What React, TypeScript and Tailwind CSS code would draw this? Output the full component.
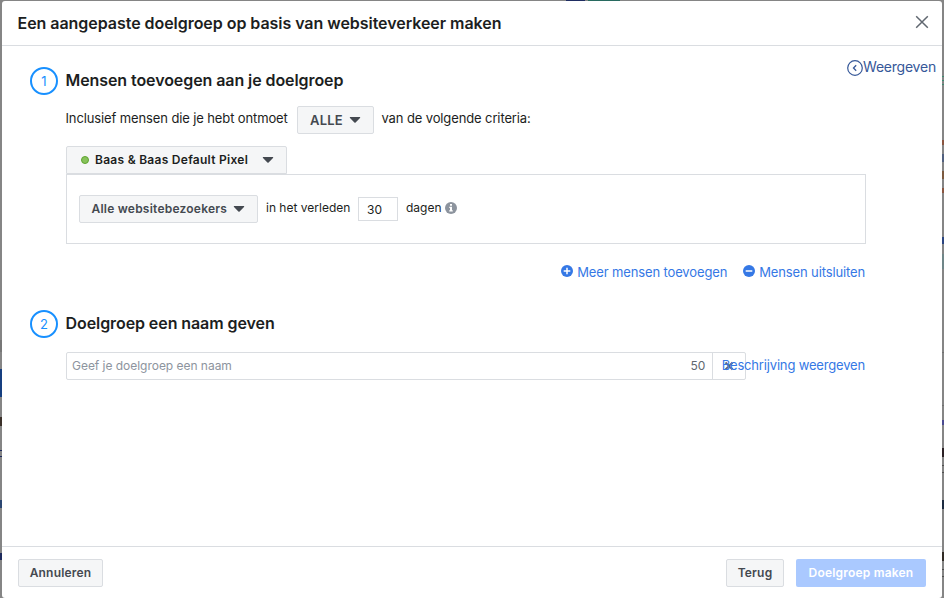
import React from 'react';

type StepHeadingProps = {
    number: number;
    title: string;
};

// Pieces of the page that stay visible beside the dialog
const leftSlices = [
    'top-[340px] h-[12px] bg-[#777777]',
    'top-[369px] h-[28px] bg-[#163f80]',
    'top-[417px] h-[9px] bg-[#3b3029]',
    'top-[450px] h-px bg-[#1d2a5c]',
    'top-[456px] h-px bg-[#1d2a5c]',
    'top-[500px] h-[8px] bg-[#2c4671]',
    'top-[553px] h-[7px] bg-[#1d2a5c]',
];

const rightSlices = [
    'top-[76px] h-px bg-[#3d8a70]',
    'top-[80px] h-px bg-[#3d8a70]',
    'top-[84px] h-px bg-[#3d8a70]',
    'top-[140px] h-[5px] bg-[#8a5540]',
    'top-[154px] h-[8px] bg-[#51607f]',
    'top-[171px] h-[8px] bg-[#7c5a40]',
    'top-[188px] h-[5px] bg-[#8a5540]',
    'top-[237px] h-[7px] bg-[#2a4480]',
    'top-[254px] h-[15px] bg-[#6f8688]',
    'top-[352px] h-px bg-[#707070]',
    'top-[405px] h-px bg-[#707070]',
    'top-[420px] h-[5px] bg-[#4a4a90]',
    'top-[448px] h-[9px] bg-[#2b2024]',
    'top-[465px] h-px bg-[#505050]',
    'top-[472px] h-px bg-[#505050]',
    'top-[500px] h-[9px] bg-[#1c2b40]',
    'top-[552px] h-[9px] bg-[#302a24]',
    'top-[569px] h-px bg-[#505050]',
    'top-[576px] h-px bg-[#505050]',
];

const Caret: React.FC = () => (
    <svg width="12" height="8" viewBox="0 0 12 8" className="shrink-0 text-[#444950]">
        <path d="M1.4 1h9.2c.6 0 .8.6.4 1L6.6 6.4a.9.9 0 0 1-1.2 0L1 2c-.4-.4-.2-1 .4-1Z" fill="currentColor" />
    </svg>
);

const StepHeading: React.FC<StepHeadingProps> = ({ number, title }) => (
    <div className="flex h-7 items-center">
        <span className="mr-[7.5px] flex size-7 shrink-0 items-center justify-center rounded-full border-2 border-[#1890ff] pt-[2px] text-[13px] text-[#1890ff]">
            {number}
        </span>
        <h2 className="-mt-[2px] text-[16px] font-semibold leading-5 tracking-[-0.08px]">{title}</h2>
    </div>
);

const App: React.FC = () => {
    return (
        <div className="relative h-[598px] w-[944px] overflow-hidden bg-[#858585] px-[2px] pt-px font-['Inter',sans-serif] text-[13px] text-[#1c1e21]">
            {leftSlices.map(slice => <span key={slice} className={`absolute left-0 w-[2px] ${slice}`} />)}
            {rightSlices.map(slice => <span key={slice} className={`absolute right-0 w-[2px] ${slice}`} />)}
            <span className="absolute left-[566px] top-0 h-px w-[19px] bg-[#1f2d62]" />
            <span className="absolute left-[588px] top-0 h-px w-[32px] bg-[#286a60]" />

            <div className="relative flex h-[597px] flex-col whitespace-nowrap rounded-[3px] bg-white">
                <header className="flex h-[45px] shrink-0 items-center justify-between border-b border-[#dadde1] pl-[15.5px] pr-[13px]">
                    <h1 className="text-[16px] font-semibold leading-5 tracking-[-0.045px]">
                        Een aangepaste doelgroep op basis van websiteverkeer maken
                    </h1>
                    <button aria-label="Sluiten" className="-mt-[2px] text-[#606770]">
                        <svg width="14" height="14" viewBox="0 0 14 14" fill="none" stroke="currentColor" strokeWidth="1.5">
                            <path d="M1.2 1.2l11.6 11.6M12.8 1.2L1.2 12.8" />
                        </svg>
                    </button>
                </header>

                <main className="relative flex-1 pl-7 pt-[21px]">
                    <button className="absolute right-[6px] top-[10px] flex h-5 items-center text-[14px] tracking-[-0.22px] text-[#365899]">
                        <svg width="16" height="16" viewBox="0 0 16 16" fill="none" stroke="currentColor" className="mt-[3px]">
                            <circle cx="8" cy="8" r="7.3" strokeWidth="1.2" />
                            <path d="M9.2 5.3L6.5 8l2.7 2.7" strokeWidth="1.3" />
                        </svg>
                        <span>Weergeven</span>
                    </button>

                    <StepHeading number={1} title="Mensen toevoegen aan je doelgroep" />

                    <section className="ml-9 w-[800px]">
                        <div className="mt-[11px] flex h-7 items-center tracking-[-0.12px]">
                            <span className="-ml-[0.5px] -mt-[2px] w-[231.5px]">Inclusief mensen die je hebt ontmoet</span>
                            <button className="mr-[7.5px] flex h-7 w-[77px] items-center justify-between rounded-[2px] border border-[#dadde1] bg-[#f5f6f7] px-3 font-semibold tracking-[0.2px] text-[#444950]">
                                <span className="pt-[2px]">ALLE</span> <Caret />
                            </button>
                            <span className="-mt-[2px]">van de volgende criteria:</span>
                        </div>

                        <button className="mt-3 flex h-7 w-[221px] items-center rounded-t-[2px] border border-[#dadde1] bg-[#f5f6f7] pl-[14px] pr-3 text-[12px] font-semibold tracking-[0.27px]">
                            <span className="mr-[6px] size-2 rounded-full border border-[#5fa52f] bg-[#87c25b]" />
                            <span className="mr-auto">Baas &amp; Baas Default Pixel</span>
                            <Caret />
                        </button>
                        <div className="flex h-[70px] border border-[#dadde1] pl-3 pt-5">
                            <button className="mr-2 flex h-7 w-[179px] items-center justify-between rounded-[2px] border border-[#dadde1] bg-[#f5f6f7] pl-[11.5px] pr-3 text-[12px] font-semibold tracking-[0.22px] text-[#444950]">
                                Alle websitebezoekers <Caret />
                            </button>
                            <span className="w-[92px] pt-[3px] text-[12px] leading-5">in het verleden</span>
                            <input
                                defaultValue="30"
                                className="mr-2 mt-[2px] h-6 w-10 border border-[#dadde1] bg-white px-2 text-[12px] outline-none"
                            />
                            <span className="w-[39px] pt-[3px] text-[12px] leading-5">dagen</span>
                            <svg width="12" height="12" viewBox="0 0 12 12" className="mt-[7px]">
                                <circle cx="6" cy="6" r="6" fill="#8d949e" />
                                <path d="M5 2h2v1.8H5zM4.3 4.8H7v3.5h.8v1.2H4.2V8.3H5V6h-.7z" fill="#fff" />
                            </svg>
                        </div>

                        <div className="mr-px mt-[19px] flex h-5 items-center justify-end tracking-[-0.13px] text-[#3578e5]">
                            <button className="mr-4 flex items-center">
                                <svg width="12" height="12" viewBox="0 0 12 12" className="-mt-[4px] mr-1">
                                    <circle cx="6" cy="6" r="6" fill="currentColor" />
                                    <path d="M6 2.7v6.6M2.7 6h6.6" stroke="#fff" strokeWidth="1.5" />
                                </svg>
                                Meer mensen toevoegen
                            </button>
                            <button className="flex items-center">
                                <svg width="12" height="12" viewBox="0 0 12 12" className="-mt-[4px] mr-1">
                                    <circle cx="6" cy="6" r="6" fill="currentColor" />
                                    <path d="M2.7 6h6.6" stroke="#fff" strokeWidth="1.5" />
                                </svg>
                                Mensen uitsluiten
                            </button>
                        </div>
                    </section>

                    <div className="mt-[27px]">
                        <StepHeading number={2} title="Doelgroep een naam geven" />
                    </div>
                    <div className="relative ml-9 mt-[14px] flex h-7 w-[800px] items-center">
                        <div className="flex h-7 w-[680px] items-center rounded-[2px] border border-[#dadde1]">
                            <input
                                placeholder="Geef je doelgroep een naam"
                                className="min-w-0 flex-1 pl-[5px] text-[12px] tracking-[-0.03px] outline-none placeholder:text-[#8d949e]"
                            />
                            <span className="mr-[7px] text-[12px] tracking-[-0.2px] text-[#606770]">50</span>
                            <button aria-label="Wissen" className="flex h-full w-[33px] items-center justify-center border-l border-[#dadde1] text-[#606770]">
                                <svg width="10" height="10" viewBox="0 0 10 10" stroke="currentColor" strokeWidth="1.8">
                                    <path d="M1.5 1.5l7 7M8.5 1.5l-7 7" />
                                </svg>
                            </button>
                        </div>
                        {/* The link runs over the clear button */}
                        <button className="absolute right-px top-[3px] leading-5 tracking-[-0.17px] text-[#3578e5]">Beschrijving weergeven</button>
                    </div>
                </main>

                <footer className="flex h-[52px] shrink-0 border-t border-[#dadde1] px-4 pt-3 text-[12px] font-semibold tracking-[0.2px]">
                    <button className="h-7 w-[85px] rounded-[2px] border border-[#dadde1] bg-[#f5f6f7] text-[#444950]">Annuleren</button>
                    <button className="ml-auto mr-3 h-7 w-[58px] rounded-[2px] border border-[#dadde1] bg-[#f5f6f7] text-[#444950]">Terug</button>
                    <button disabled className="h-7 w-[130px] rounded-[2px] bg-[#aac9ff] text-white">Doelgroep maken</button>
                </footer>
            </div>
        </div>
    );
};

export default App;
